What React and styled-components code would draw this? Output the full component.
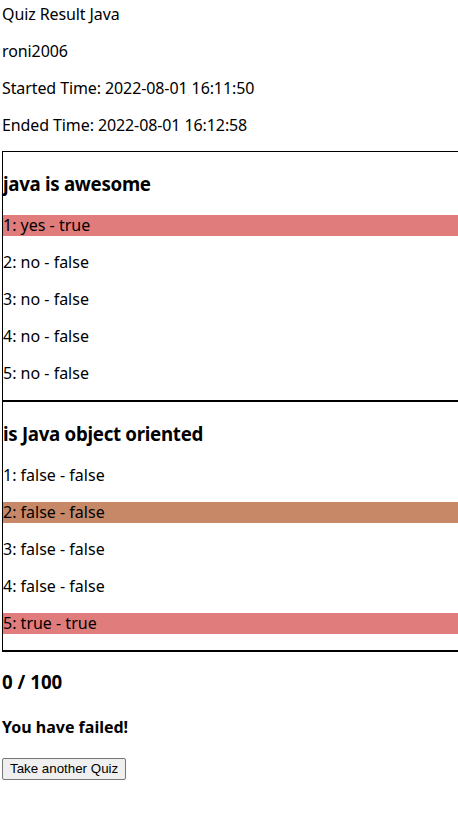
import React from 'react';
import styled, { createGlobalStyle } from 'styled-components';

// Page reset: no body margin, the result page sits flush at the top left
const GlobalStyle = createGlobalStyle`
  html, body {
    margin: 0;
    padding: 0;
    background: #ffffff;
    overflow-x: hidden;
  }
  body {
    font-family: "Noto Sans", "Open Sans", sans-serif;
    color: #000;
  }
`;

const Page = styled.div`
  display: flex;
  flex-direction: column;
  align-items: flex-start;
  padding: 4px 0 40px 2px;
`;

// Info lines at the top (title, user, times)
const InfoBlock = styled.div`
  display: flex;
  flex-direction: column;
  gap: 16px;
  margin-bottom: 15px;
`;

const InfoLine = styled.p`
  margin: 0;
  font-size: 16px;
  line-height: 21px;
  letter-spacing: -0.1px;
`;

// Wrapper for all the question boxes, runs to the right edge
const QuestionList = styled.div`
  align-self: stretch;
  border-bottom: 1px solid #000;
`;

const QuestionBox = styled.div`
  display: flex;
  flex-direction: column;
  gap: 16px;
  border: 1px solid #000;
  border-right: none;
  padding: 19px 0 16px;
`;

const QuestionTitle = styled.h3`
  margin: 0 0 3px;
  font-size: 18.72px;
  line-height: 25px;
  font-weight: 700;
  letter-spacing: -0.3px;
`;

// A single answer row, highlighted when it was picked or correct
const AnswerRow = styled.p`
  margin: 0;
  font-size: 16px;
  line-height: 21px;
  background: ${({ $tone }) =>
    $tone === 'correct' ? '#e17c7c' : $tone === 'picked' ? '#c78868' : 'transparent'};
`;

const Score = styled.h3`
  margin: 17px 0 0;
  font-size: 18.72px;
  line-height: 25px;
  font-weight: 700;
`;

const Verdict = styled.h4`
  margin: 23px 0 0;
  font-size: 16px;
  line-height: 21px;
  font-weight: 700;
`;

const RetryButton = styled.button`
  margin-top: 20px;
  font-family: "Liberation Sans", Arial, sans-serif;
  font-size: 13.333px;
  line-height: 15px;
  padding: 2px 7px 3px;
  color: #000;
  background: #efefef;
  border: 1px solid #767676;
  border-radius: 2px;
`;

const questions = [
  {
    title: 'java is awesome',
    answers: [
      { text: '1: yes - true', tone: 'correct' },
      { text: '2: no - false' },
      { text: '3: no - false' },
      { text: '4: no - false' },
      { text: '5: no - false' },
    ],
  },
  {
    title: 'is Java object oriented',
    answers: [
      { text: '1: false - false' },
      { text: '2: false - false', tone: 'picked' },
      { text: '3: false - false' },
      { text: '4: false - false' },
      { text: '5: true - true', tone: 'correct' },
    ],
  },
];

const App = () => {
  return (
    <>
      <GlobalStyle />
      <Page>
        <InfoBlock>
          <InfoLine>Quiz Result Java</InfoLine>
          <InfoLine>roni2006</InfoLine>
          <InfoLine>Started Time: 2022-08-01 16:11:50</InfoLine>
          <InfoLine>Ended Time: 2022-08-01 16:12:58</InfoLine>
        </InfoBlock>
        <QuestionList>
          {questions.map((q) => (
            <QuestionBox key={q.title}>
              <QuestionTitle>{q.title}</QuestionTitle>
              {q.answers.map((a) => (
                <AnswerRow key={a.text} $tone={a.tone}>
                  {a.text}
                </AnswerRow>
              ))}
            </QuestionBox>
          ))}
        </QuestionList>
        <Score>0 / 100</Score>
        <Verdict>You have failed!</Verdict>
        <RetryButton>Take another Quiz</RetryButton>
      </Page>
    </>
  );
};

export default App;
